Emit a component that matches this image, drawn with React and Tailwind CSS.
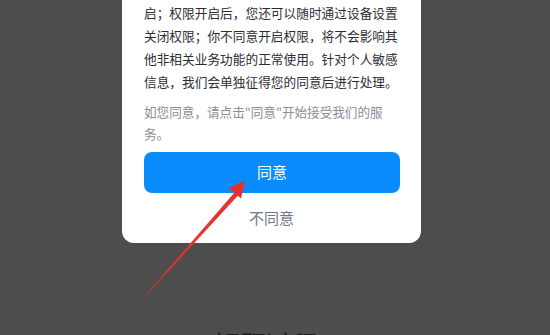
import React from 'react';

const cjk = { fontFamily: '"Noto Sans CJK SC", "Noto Sans", sans-serif' };

function Arrow() {
  return (
    <svg className="absolute left-0 top-0 pointer-events-none" width="550" height="335" viewBox="0 0 550 335">
      <defs>
        <linearGradient id="fade" x1="130" y1="313" x2="244" y2="183" gradientUnits="userSpaceOnUse">
          <stop offset="0" stopColor="#e5312b" stopOpacity="0.35" />
          <stop offset="0.3" stopColor="#e5312b" stopOpacity="0.95" />
          <stop offset="1" stopColor="#e5312b" />
        </linearGradient>
      </defs>
      <polygon points="129,314 234.5,192.5 238,195.5" fill="url(#fade)" />
      <polygon points="245,181 241,198.5 228.5,188" fill="#e5312b" />
    </svg>
  );
}

export default function App() {
  return (
    <div className="relative w-[550px] h-[335px] overflow-hidden bg-[#4d4d4d]" style={cjk}>
      <div className="ml-[122px] w-[299px] rounded-b-[12px] bg-white px-[22px] pt-[1px]">
        <div className="text-[12.7px] leading-[23px] text-[#2c2e35] whitespace-nowrap">
          <div>启；权限开启后，您还可以随时通过设备设置</div>
          <div>关闭权限；你不同意开启权限，将不会影响其</div>
          <div>他非相关业务功能的正常使用。针对个人敏感</div>
          <div>信息，我们会单独征得您的同意后进行处理。</div>
        </div>
        <div className="mt-[8px] text-[12.6px] leading-[22px] text-[#8a8e98] whitespace-nowrap">
          <div>如您同意，请点击"同意"开始接受我们的服</div>
          <div>务。</div>
        </div>
        <button className="mt-[7px] flex h-[41px] w-[256px] items-center justify-center rounded-[8px] bg-[#0b8cfc] text-[15px] text-white">
          同意
        </button>
        <div className="flex h-[50px] items-center justify-center text-[15px] text-[#717684]">
          不同意
        </div>
      </div>
      <div className="mt-[88px] flex items-center gap-[10px] pl-[196px] text-[26px] leading-none text-[#1c1c1c]">
        <span>‹</span>
        <span>解题过程</span>
      </div>
      <Arrow />
    </div>
  );
}
